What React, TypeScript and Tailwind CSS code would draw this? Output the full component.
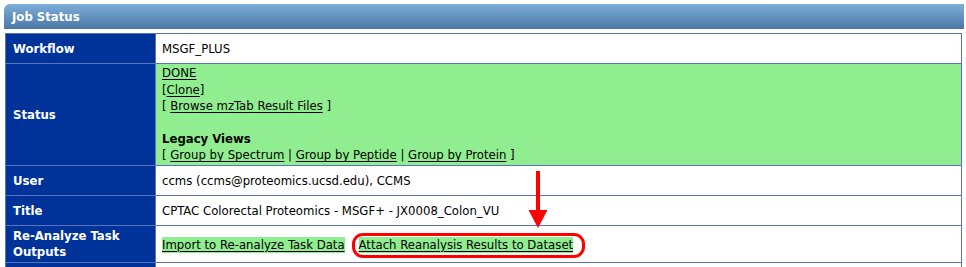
const font = { fontFamily: '"DejaVu Sans Condensed", "DejaVu Sans", sans-serif' };

function Label({ children }: { children: React.ReactNode }) {
  return (
    <td className="bg-[#003399] border border-[#5d73b9] text-white font-bold text-[13px] leading-[16px] pl-[7px] pr-2 align-middle">
      {children}
    </td>
  );
}

function Value({ children, green }: { children: React.ReactNode; green?: boolean }) {
  return (
    <td
      className={`border border-[#5d73b9] text-black text-[13px] pl-[6px] pr-2 align-middle ${
        green ? 'bg-[#90ee90]' : 'bg-white'
      }`}
    >
      {children}
    </td>
  );
}

function Link({ children }: { children: React.ReactNode }) {
  return <span className="underline underline-offset-[2px] decoration-1">{children}</span>;
}

export default function App() {
  return (
    <div className="w-[966px] h-[267px] overflow-hidden bg-white pl-[4px] pt-[4px]" style={font}>
      <div className="w-[960px] h-[25px] rounded-tl-[6px] bg-gradient-to-b from-[#7eaedb] to-[#4b77a5] flex items-center pl-[8px] text-white font-bold text-[13px]">
        Job Status
      </div>
      <div className="relative ml-[1px] mt-[4px] w-[957px]">
        <table className="w-full border-collapse border border-[#5d73b9]">
          <colgroup>
            <col className="w-[150px]" />
            <col />
          </colgroup>
          <tbody>
            <tr className="h-[30px]">
              <Label>Workflow</Label>
              <Value>MSGF_PLUS</Value>
            </tr>
            <tr className="h-[102px]">
              <Label>Status</Label>
              <Value green>
                <div className="leading-[16.4px] py-[1px]">
                  <div>
                    <Link>DONE</Link>
                  </div>
                  <div>
                    [<Link>Clone</Link>]
                  </div>
                  <div>
                    [ <Link>Browse mzTab Result Files</Link> ]
                  </div>
                  <div>&nbsp;</div>
                  <div className="font-bold">Legacy Views</div>
                  <div>
                    [ <Link>Group by Spectrum</Link> | <Link>Group by Peptide</Link> |{' '}
                    <Link>Group by Protein</Link> ]
                  </div>
                </div>
              </Value>
            </tr>
            <tr className="h-[30px]">
              <Label>User</Label>
              <Value>ccms (ccms@proteomics.ucsd.edu), CCMS</Value>
            </tr>
            <tr className="h-[30px]">
              <Label>Title</Label>
              <Value>CPTAC Colorectal Proteomics - MSGF+ - JX0008_Colon_VU</Value>
            </tr>
            <tr className="h-[37px]">
              <Label>
                Re-Analyze Task
                <br />
                Outputs
              </Label>
              <Value>
                <div className="flex items-center gap-[14px] pt-[1px]">
                  <span className="bg-[#90ee90] underline underline-offset-[2px] leading-[16px]">
                    Import to Re-analyze Task Data
                  </span>
                  <span className="relative bg-[#90ee90] underline underline-offset-[2px] leading-[16px]">
                    Attach Reanalysis Results to Dataset
                    <span className="absolute -left-[7px] -right-[12px] -top-[4px] -bottom-[5px] rounded-[11px] border-[3px] border-[#ff0000]" />
                  </span>
                </div>
              </Value>
            </tr>
            <tr className="h-[30px]">
              <Label>&nbsp;</Label>
              <Value>&nbsp;</Value>
            </tr>
          </tbody>
        </table>
        <svg className="absolute left-[522px] top-[138px]" width="22" height="60" viewBox="0 0 22 60">
          <rect x="9" y="0" width="4" height="40" fill="#ff0000" />
          <polygon points="1.5,39 20.5,39 11,57" fill="#ff0000" />
        </svg>
      </div>
    </div>
  );
}
